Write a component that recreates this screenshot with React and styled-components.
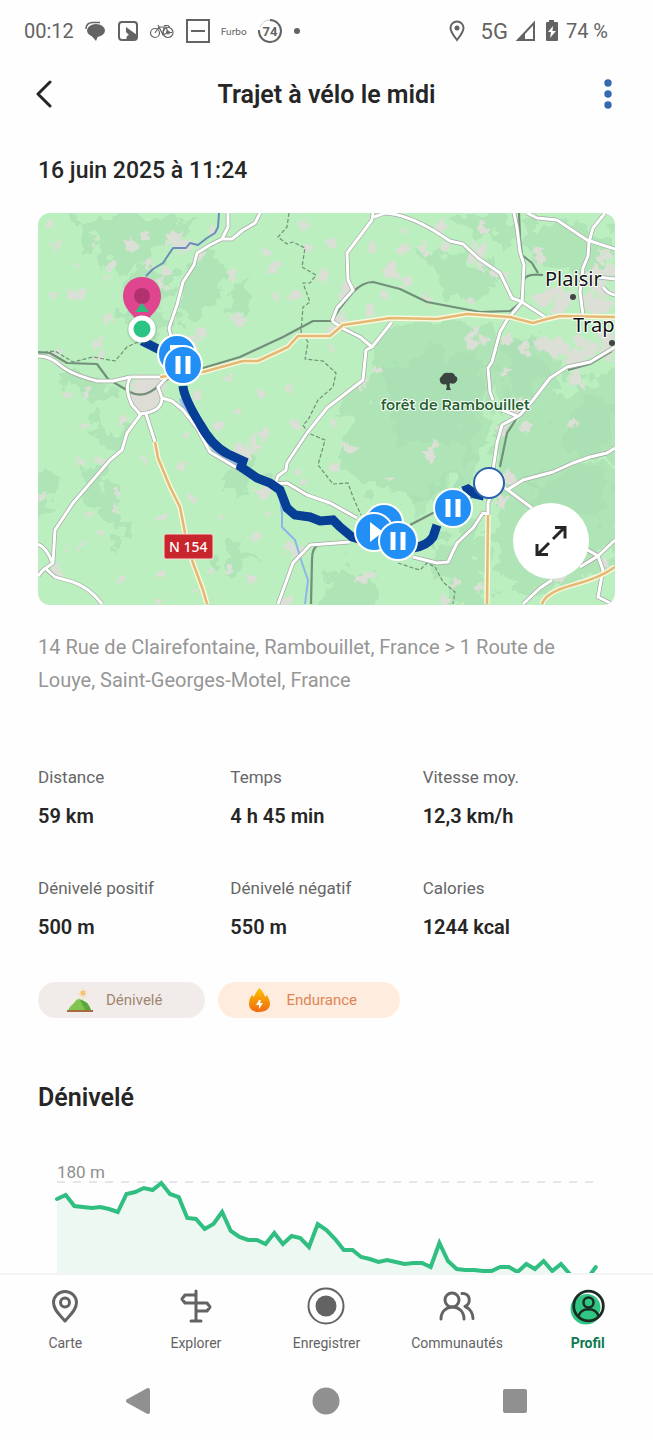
import React from "react";
import styled, { createGlobalStyle } from "styled-components";

const GlobalStyle = createGlobalStyle`
  * {
    box-sizing: border-box;
  }
  body {
    margin: 0;
    background-color: #fefefe;
    color: #262626;
    font-family: Roboto, "Liberation Sans", sans-serif;
  }
  button {
    padding: 0;
    border: none;
    background: none;
    font: inherit;
    cursor: pointer;
  }
  svg {
    display: block;
  }
`;

const Screen = styled.div`
  height: 100vh;
  display: flex;
  flex-direction: column;
`;

/* status bar */

const StatusBar = styled.div`
  display: flex;
  flex-shrink: 0;
  align-items: center;
  justify-content: space-between;
  height: 62px;
  padding: 0 45px 0 24px;
  color: #636363;
  font-size: 20px;
`;

const StatusGroup = styled.div`
  display: flex;
  align-items: center;
  gap: ${(props) => props.gap};
`;

const Network = styled.span`
  font-size: 22px;
`;

const Brand = styled.span`
  font-family: Lato, sans-serif;
  font-size: 10px;
`;

/* header */

const Header = styled.header`
  display: grid;
  grid-template-columns: 1fr auto 1fr;
  flex-shrink: 0;
  align-items: center;
  height: 64px;
  padding: 0 36px;
`;

const Title = styled.h1`
  margin: 0;
  font-size: 25px;
  font-weight: 600;
`;

const HeaderButton = styled.button`
  justify-self: ${(props) => props.side};
`;

/* content */

const Content = styled.main`
  flex: 1;
  min-height: 0;
  overflow: hidden;
  padding: 30px 38px 0;
`;

const DateLine = styled.p`
  margin: 0 0 27px;
  font-size: 23px;
  font-weight: 500;
  line-height: 30px;
`;

const MapCard = styled.div`
  position: relative;
  overflow: hidden;
  border-radius: 12px;
`;

const MapDrawing = styled.svg`
  width: 100%;
  height: auto;
`;

const ExpandButton = styled.button`
  position: absolute;
  right: 26px;
  bottom: 26px;
  display: flex;
  align-items: center;
  justify-content: center;
  width: 76px;
  height: 76px;
  border-radius: 50%;
  background-color: #ffffff;
`;

const Address = styled.p`
  margin: 26px 0 68px;
  color: #969696;
  font-size: 20px;
  line-height: 33px;
`;

const Stats = styled.dl`
  display: grid;
  grid-template-columns: repeat(3, 1fr);
  row-gap: 45px;
  margin: 0;
`;

const StatLabel = styled.dt`
  margin-bottom: 12px;
  color: #666666;
  font-size: 17px;
  line-height: 24px;
`;

const StatValue = styled.dd`
  margin: 0;
  font-size: 20px;
  font-weight: 600;
  line-height: 30px;
`;

const Chips = styled.div`
  display: flex;
  gap: 13px;
  margin: 40px 0 62px;
`;

const Chip = styled.div`
  display: flex;
  align-items: center;
  gap: 12px;
  height: 36px;
  padding: 0 43px 0 28px;
  border-radius: 18px;
  background-color: ${(props) => props.bg};
  color: ${(props) => props.color};
  font-size: 15px;
`;

const SectionTitle = styled.h2`
  margin: 0 0 48px;
  font-size: 25px;
  font-weight: 600;
  line-height: 36px;
`;

const ChartLabel = styled.p`
  margin: 0 19px;
  color: #8f8f8f;
  font-size: 17px;
  line-height: 16px;
`;

const Chart = styled.svg`
  width: 100%;
  height: auto;
`;

/* bottom navigation */

const TabBar = styled.nav`
  display: grid;
  grid-template-columns: repeat(5, 1fr);
  flex-shrink: 0;
  height: 89px;
  padding-top: 12px;
  border-top: 2px solid #f3f4f4;
`;

const Tab = styled.a`
  display: flex;
  flex-direction: column;
  align-items: center;
  gap: 8px;
  color: ${(props) => (props.$active ? "#0c7a4f" : "#636363")};
  font-size: 14px;
  font-weight: ${(props) => (props.$active ? 700 : 400)};
  line-height: 20px;
  text-decoration: none;
`;

const SystemBar = styled.div`
  display: grid;
  grid-template-columns: repeat(3, 1fr);
  flex-shrink: 0;
  justify-items: center;
  align-items: center;
  height: 78px;
  padding: 0 44px;
`;

const stats = [
  { label: "Distance", value: "59 km" },
  { label: "Temps", value: "4 h 45 min" },
  { label: "Vitesse moy.", value: "12,3 km/h" },
  { label: "Dénivelé positif", value: "500 m" },
  { label: "Dénivelé négatif", value: "550 m" },
  { label: "Calories", value: "1244 kcal" },
];

// depth under the 180 m line, one value per sample
const samples = [
  17, 13, 24, 25, 26, 25, 27, 30, 12, 10, 6, 8, 1, 12, 15, 36, 37, 47, 42, 30,
  49, 55, 58, 58, 62, 51, 62, 54, 56, 65, 42, 48, 57, 68, 68, 75, 77, 80, 78,
  80, 82, 81, 81, 85, 61, 79, 87, 88, 88, 89, 89, 85, 85, 90, 82, 87, 79, 89,
  82, 92, 100, 97, 85,
];

const profile = samples
  .map((depth, i) => `${(19 + i * 8.69).toFixed(1)},${depth + 2}`)
  .join(" ");

// x, y, radius of the built-up patches
const patches = [
  [50, 227, 5], [55, 246, 6], [94, 245, 4], [130, 245, 8], [144, 236, 6],
  [180, 243, 11], [172, 240, 8], [78, 264, 4], [110, 265, 5], [107, 279, 4],
  [150, 265, 6], [168, 272, 6], [162, 283, 5], [200, 254, 6], [232, 274, 6],
  [267, 252, 5], [273, 267, 7], [308, 248, 5], [304, 225, 6], [323, 278, 5],
  [72, 294, 6], [83, 297, 5], [52, 296, 4], [110, 319, 5], [276, 296, 4],
  [294, 295, 7], [238, 319, 8], [198, 335, 8], [190, 348, 8], [215, 230, 5],
  [98, 345, 6], [99, 357, 5], [55, 353, 6], [180, 375, 5], [230, 380, 4],
  [69, 396, 4], [87, 393, 5], [199, 398, 6], [261, 393, 4], [290, 388, 4],
  [84, 425, 4], [123, 422, 6], [187, 435, 4], [218, 426, 5], [237, 413, 4],
  [255, 442, 8], [243, 451, 9], [296, 424, 6], [262, 434, 6], [80, 461, 4],
  [100, 460, 4], [143, 459, 4], [182, 465, 4], [42, 496, 5], [118, 494, 4],
  [89, 514, 5], [116, 509, 4], [192, 498, 5], [161, 517, 6], [100, 533, 4],
  [67, 549, 4], [82, 545, 4], [56, 570, 6], [121, 579, 5], [255, 537, 6],
  [223, 516, 3], [261, 492, 9], [267, 515, 4], [298, 471, 4], [305, 481, 4],
  [295, 551, 9], [288, 547, 7], [230, 571, 5], [211, 571, 3], [161, 574, 4],
  [250, 579, 5], [160, 603, 5], [196, 591, 4], [285, 602, 8], [330, 242, 6],
  [372, 247, 5], [403, 248, 6], [424, 249, 6], [444, 247, 6], [440, 227, 7],
  [482, 227, 6], [478, 252, 9], [480, 262, 7], [345, 292, 8], [350, 286, 6],
  [392, 273, 9], [406, 284, 7], [427, 297, 6], [370, 311, 6], [324, 277, 6],
  [404, 232, 4], [540, 256, 7], [385, 295, 4], [493, 273, 5], [507, 275, 4],
  [342, 321, 7], [332, 330, 5], [365, 382, 7], [376, 370, 4], [475, 332, 6],
  [470, 343, 8], [482, 338, 5], [507, 340, 6], [540, 300, 10], [552, 292, 9],
  [565, 298, 9], [560, 306, 8], [590, 302, 12], [604, 307, 9], [600, 290, 10],
  [596, 277, 9], [604, 256, 7], [610, 272, 8], [545, 345, 9], [560, 350, 12],
  [573, 357, 11], [590, 350, 10], [580, 340, 9], [607, 352, 8], [577, 380, 9],
  [604, 335, 9], [330, 348, 4], [333, 422, 5], [348, 448, 7], [336, 468, 5],
  [430, 455, 7], [435, 445, 5], [527, 428, 6], [520, 405, 9], [512, 412, 7],
  [500, 430, 8], [389, 478, 4], [367, 576, 7], [360, 577, 4], [456, 584, 5],
  [446, 600, 6], [480, 588, 5], [508, 480, 8], [503, 500, 7], [560, 575, 9],
  [605, 565, 6], [573, 424, 5], [505, 371, 4], [525, 349, 7], [470, 300, 4],
];

const woods = [
  "M110 235 L150 220 190 222 168 245 150 252 132 270 112 262 96 268 100 250Z",
  "M84 225 L120 214 146 218 110 232 88 240Z",
  "M190 275 L204 260 222 272 214 300 196 320 184 316Z",
  "M150 262 L172 278 160 300 178 330 160 335 128 318 134 290Z",
  "M236 292 L250 285 246 300 238 308Z",
  "M455 218 L500 214 512 225 500 240 470 232Z",
  "M425 255 L470 258 500 285 470 300 440 280Z",
  "M527 226 L575 222 615 250 590 280 540 268Z",
  "M375 340 L410 325 480 325 500 350 488 390 492 430 470 470 420 500 380 490 340 470 352 440 345 410 372 385Z",
  "M500 340 L560 345 550 380 520 410 500 400 492 370Z",
  "M538 400 L580 380 625 378 625 445 560 470 520 480 500 500 503 440Z",
  "M505 500 L540 480 625 460 625 540 560 590 510 580 495 540Z",
  "M430 545 L480 530 482 614 462 614 452 580 430 560Z",
  "M330 578 L352 570 380 590 352 614 325 614Z",
  "M220 555 L244 545 256 560 230 565Z",
  "M28 475 L58 482 50 508 28 515Z",
  "M92 475 L112 490 124 535 116 540 100 505 84 494Z",
  "M225 486 L248 465 255 470 232 497Z",
  "M60 372 L90 378 120 392 104 400 70 386Z",
  "M96 418 L124 440 112 448 92 432Z",
];

const darkWoods = [
  "M388 372 L430 350 478 352 484 390 470 430 480 462 430 440 390 450 396 412Z",
  "M505 348 L530 340 545 372 520 398 500 384Z",
  "M560 420 L600 395 615 410 612 440 575 455Z",
  "M525 490 L570 470 612 475 600 520 550 520Z",
  "M412 500 L440 480 465 470 448 500 410 520Z",
];

const whiteRoads = [
  "M228 213 L228 227 222 239",
  "M260 213 L255 223 243 230 232 239 222 239 210 245 197 253 194 265 183 282 177 305 169 328 172 342",
  "M38 356 Q50 356 60 365 T97 381 L113 381 130 377 160 377",
  "M130 378 Q124 388 132 405 L140 414 Q162 412 162 398 L158 387 168 376",
  "M162 398 L172 401 183 410 197 428 210 452 237 468 270 484 287 483 307 495 330 503 357 518",
  "M141 414 L127 433 122 450 110 460 73 503 55 530 53 563 43 570 38 576",
  "M38 544 Q47 548 52 562",
  "M45 568 L55 577 73 582 Q90 588 102 604",
  "M146 414 L155 442",
  "M276 482 L278 476 286 470 287 463 307 433 327 408 363 380 366 350 372 347 392 322",
  "M332 321 L342 328 360 337 372 347",
  "M373 213 L372 220 347 253 348 280 353 290 337 308 332 321",
  "M374 217 L385 213 Q405 214 433 230 L450 241 463 244 478 258 500 273 512 298 522 302 545 317",
  "M514 213 L517 228 520 252 524 265 522 302 507 320 500 332 492 362 488 368 490 392 493 400",
  "M527 213 L537 218 557 220 587 240 615 249",
  "M605 213 L593 228 589 242 588 256 583 268 580 292 583 315",
  "M598 277 L615 279",
  "M603 287 Q608 294 615 295",
  "M615 347 L590 362 567 367 550 378 533 400 520 415 502 425 497 443 493 470",
  "M502 410 L517 416",
  "M615 448 L607 453 590 457 573 463 553 472 523 480 507 490",
  "M505 488 L532 508",
  "M586 549 L598 556 580 567",
  "M615 540 L598 556 603 570 598 597 612 604",
  "M552 580 L540 588 523 604",
  "M488 515 L488 503 493 490",
  "M487 514 L483 513 473 528 457 543 448 562 437 563 413 557",
  "M350 542 L310 545 293 563 278 604",
];

const orangeRoads = [
  "M160 377 L203 372 243 361 258 361 288 347 298 336 330 336 343 325 390 318 437 319 467 314 510 317 533 323 547 319 560 316 615 317",
  "M155 442 L158 458 170 487 180 507 185 533 193 563 203 590 207 604",
  "M488 515 L487 604",
  "M615 567 Q600 578 573 585 T542 604",
];

const rails = [
  "M38 352 L50 353 67 363 97 364 108 379 130 392 Q145 400 160 384 L180 371 203 368 240 357 283 337 313 321 332 321 340 308 353 292 Q363 282 373 282 L400 289 427 302 480 312 510 311 520 303 524 280 Q526 273 543 275",
  "M519 213 L520 238 522 255 532 263 538 273",
  "M612 351 L590 364 568 370",
  "M517 418 L507 433 500 467",
  "M410 525 L433 513 460 503 482 492",
  "M330 544 L318 545 Q312 548 312 560 L311 604",
];

const borders = [
  "M289 213 L287 227 278 237 287 244 293 242 305 248 302 267 316 275 310 283 303 283 310 302 303 307 301 332 308 342 305 359 323 361 336 373 333 387 318 400 308 420 303 425 308 433 325 440 318 465 333 484 348 483 353 497 361 515",
  "M398 563 L413 568 420 570 427 563 435 567 443 582 455 592 453 604",
  "M38 353 L55 351 73 362 93 357 115 361 127 347 140 341",
];

// jagged outline around a centre; the wobble only depends on the position
const outline = ([x, y, r]) =>
  Array.from({ length: 9 }, (_, i) => {
    const angle = (i / 9) * Math.PI * 2;
    const wobble = 0.45 + (((x * 7 + y * 13 + i * i * 29) % 17) / 17) * 0.95;
    const px = x + Math.cos(angle) * r * wobble;
    const py = y + Math.sin(angle) * r * wobble;
    return `${px.toFixed(1)},${py.toFixed(1)}`;
  }).join(" ");

const PausePin = ({ x, y }) => (
  <g>
    <circle cx={x} cy={y} r="19" fill="#218ff5" stroke="#fff" strokeWidth="2" />
    <path d={`M${x - 5} ${y - 9}v18M${x + 5} ${y - 9}v18`} stroke="#fff" strokeWidth="5" />
  </g>
);

const RouteMap = () => (
  <MapDrawing viewBox="38 213 577 392" role="img" aria-label="Carte du trajet">
    <defs>
      <filter id="ragged" x="-10%" y="-10%" width="120%" height="120%">
        <feTurbulence type="fractalNoise" baseFrequency="0.05" numOctaves="4" seed="4" />
        <feDisplacementMap in="SourceGraphic" scale="46" xChannelSelector="R" yChannelSelector="G" />
      </filter>
      <filter id="rough" x="-10%" y="-10%" width="120%" height="120%">
        <feTurbulence type="fractalNoise" baseFrequency="0.15" numOctaves="2" seed="7" />
        <feDisplacementMap in="SourceGraphic" scale="12" xChannelSelector="R" yChannelSelector="G" />
      </filter>
    </defs>
    <rect x="38" y="213" width="577" height="392" fill="#bbefbf" />
    <g fill="#abe2b3" opacity="0.75" filter="url(#ragged)">
      {woods.map((d) => (
        <path key={d} d={d} stroke="#abe2b3" strokeWidth="6" />
      ))}
    </g>
    <g fill="#a3daaf" opacity="0.4" filter="url(#ragged)">
      {darkWoods.map((d) => (
        <path key={d} d={d} />
      ))}
    </g>
    <g fill="#dcdfd5" filter="url(#rough)">
      {patches.map((p) => (
        <polygon key={p.join()} points={outline(p)} />
      ))}
      <path d="M131 384l12-8 24 2-3 14-8 16-14 6-10-10z" fill="#dedcd7" />
    </g>
    <g fill="none" strokeLinejoin="round">
      <path
        d="M219 213 L218 227 215 233 207 238 198 245 190 243 186 248 173 248 167 257 163 263 153 269 146 276"
        stroke="#6a8dba"
        strokeWidth="2"
      />
      <path
        d="M184 398 L192 420 205 440 222 457 240 466 265 480 279 490 282 513 282 527 295 540 302 563 308 580 305 604"
        stroke="#8db5ea"
        strokeWidth="2"
      />
      <path d="M182 398l10 22M212 450l22 13" stroke="#a3c1ed" strokeWidth="7" />
      {borders.map((d) => (
        <path key={d} d={d} stroke="#71917a" strokeWidth="1.2" strokeDasharray="4 2" />
      ))}
      {rails.map((d) => (
        <path key={d} d={d} stroke="#728f7a" strokeWidth="2.2" />
      ))}
      {whiteRoads.map((d) => (
        <path key={d} d={d} stroke="#a4aaa4" strokeWidth="4.4" />
      ))}
      {whiteRoads.map((d) => (
        <path key={d} d={d} stroke="#fff" strokeWidth="3" />
      ))}
      {orangeRoads.map((d) => (
        <path key={d} d={d} stroke="#fbf7dd" strokeWidth="5.4" />
      ))}
      {orangeRoads.map((d) => (
        <path key={d} d={d} stroke="#e3b974" strokeWidth="2.6" />
      ))}
    </g>

    <g
      fontFamily="'Noto Sans', sans-serif"
      stroke="#fff"
      strokeWidth="2"
      strokeLinejoin="round"
      paintOrder="stroke"
    >
      <text x="545" y="286" fontSize="20" fill="#111">Plaisir</text>
      <text x="573" y="332" fontSize="20" fill="#111">Trap</text>
      <text
        x="381"
        y="410"
        fontSize="14"
        fontWeight="600"
        fill="#22602c"
        fontFamily="Montserrat, Lato, sans-serif"
      >
        forêt de Rambouillet
      </text>
    </g>
    <circle cx="573" cy="297" r="3" fill="#444" />
    <circle cx="612" cy="343" r="3" fill="#444" />
    <path
      d="M446 390c1-3 1-4 0-6-2 1-6 0-6-3-1-3 1-4 2-5 1-3 4-4 7-3 3-1 6 1 6 3 3 1 3 4 1 6-1 2-4 2-6 1-1 3 0 5 1 7zM446 385l-3-4M449 385l4-4"
      fill="#3a4440"
    />
    <rect x="164" y="534" width="49" height="25" rx="2" fill="#c9252d" stroke="#f5dcd7" />
    <text x="169" y="552" fontFamily="'Noto Sans', sans-serif" fontSize="14" fontWeight="500" fill="#fff">
      N 154
    </text>

    <g fill="none" stroke="#063f95" strokeWidth="9">
      <path d="M142 341 L158 349 170 352" />
      <path d="M183 386 Q184 398 200 424 Q212 446 228 454 L243 461 241 467 257 478 270 483 280 490 287 508 295 515 310 517 320 521 333 520 340 527 352 537 362 540" />
      <path d="M413 548 Q427 546 433 537 L437 525" />
      <path d="M463 491 L468 489 475 494 484 496" />
    </g>

    <path d="M142 277c-11 0-19 8-19 19 0 14 12 19 19 32 7-13 19-18 19-32 0-11-8-19-19-19z" fill="#e0458f" />
    <circle cx="142" cy="296" r="8" fill="#b1326e" />
    <path d="M142 303l7 9h-14z" fill="#2cbc7e" />
    <circle cx="142" cy="330" r="15" fill="#41664f" opacity="0.15" />
    <circle cx="142" cy="329" r="11" fill="#2cc482" stroke="#fff" strokeWidth="5" />

    <circle cx="177" cy="354" r="19" fill="#218ff5" stroke="#fff" strokeWidth="2" />
    <path d="M170 347h12" stroke="#fff" strokeWidth="4" />
    <PausePin x={183} y={365} />
    <circle cx="384" cy="523" r="19" fill="#218ff5" stroke="#fff" strokeWidth="2" />
    <circle cx="374" cy="532" r="19" fill="#218ff5" stroke="#fff" strokeWidth="2" />
    <path d="M370 522l13 10-13 10z" fill="#fff" />
    <PausePin x={398} y={541} />
    <PausePin x={453} y={508} />
    <circle cx="489" cy="483" r="15" fill="#fff" stroke="#2b60ad" strokeWidth="2" />
  </MapDrawing>
);

const ElevationChart = () => (
  <Chart viewBox="0 0 577 130" role="img" aria-label="Profil du dénivelé">
    <polygon points={`19,130 ${profile} 558,130`} fill="#edf8f3" />
    <path d="M19 2H558" stroke="#e6e6e6" strokeWidth="2" strokeDasharray="8 8" />
    <polyline points={profile} fill="none" stroke="#30be81" strokeWidth="4" strokeLinecap="round" />
  </Chart>
);

const PinIcon = () => (
  <svg width="34" height="38" viewBox="0 0 34 38" fill="none" stroke="#636363" strokeWidth="3">
    <path d="M17 34C12 28 5.500 23 5.500 15.500a11.500 11 0 0 1 23 0C28.500 23 22 28 17 34z" strokeLinejoin="round" />
    <circle cx="17" cy="15.500" r="4.500" />
  </svg>
);

const SignIcon = () => (
  <svg width="34" height="38" viewBox="0 0 34 38" fill="none" stroke="#636363" strokeWidth="3" strokeLinejoin="round" strokeLinecap="round">
    <path d="M17 4v30M12 34h10M17 8H6L3 12l3 4h22l3 4-3 4H17" />
  </svg>
);

const RecordIcon = () => (
  <svg width="38" height="38" viewBox="0 0 38 38">
    <circle cx="19" cy="19" r="17.500" fill="none" stroke="#636363" strokeWidth="2" />
    <circle cx="19" cy="19" r="10.500" fill="#636363" />
  </svg>
);

const PeopleIcon = () => (
  <svg width="38" height="38" viewBox="0 0 38 38" fill="none" stroke="#636363" strokeWidth="3" strokeLinecap="round">
    <circle cx="14" cy="13" r="7" />
    <path d="M3 32c0-16 23-16 23 0M24 6.500c8-1 10 10 3 13 5 2 8 7 8 12" strokeLinejoin="round" />
  </svg>
);

const ProfileIcon = () => (
  <svg width="38" height="38" viewBox="0 0 38 38" fill="none" stroke="#1c2a24" strokeWidth="2.500">
    <circle cx="17" cy="22" r="15.500" fill="#2fc583" stroke="none" />
    <circle cx="19.500" cy="19" r="14.500" fill="#fff" stroke="none" />
    <circle cx="18" cy="20.500" r="13.500" fill="#2fc583" stroke="none" />
    <circle cx="19.500" cy="19" r="14.800" strokeWidth="2.800" />
    <circle cx="19.500" cy="15.500" r="5" />
    <path d="M9.500 29c3-9 17-9 20 0" />
  </svg>
);

const tabs = [
  { name: "Carte", Icon: PinIcon },
  { name: "Explorer", Icon: SignIcon },
  { name: "Enregistrer", Icon: RecordIcon },
  { name: "Communautés", Icon: PeopleIcon },
  { name: "Profil", Icon: ProfileIcon, active: true },
];

const App = () => {
  return (
    <Screen>
      <GlobalStyle />
      <StatusBar>
        <StatusGroup gap="11px">
          <span>00:12</span>
          <svg width="20" height="22" viewBox="0 0 20 22" fill="#636363">
            <ellipse cx="11" cy="10.500" rx="9" ry="6.500" />
            <path d="M5 14l6 7 2-5z" />
            <path d="M1 9Q1 3 7 2.500H15" fill="none" stroke="#636363" strokeWidth="1.500" />
          </svg>
          <svg width="22" height="22" viewBox="0 0 22 22">
            <rect x="3" y="2" width="18" height="18" rx="3" fill="none" stroke="#636363" strokeWidth="2" />
            <path d="M10 7l11 8v5H10l1-4 2-1-3-3z" fill="#636363" />
          </svg>
          <svg width="26" height="22" viewBox="0 0 26 22" fill="none" stroke="#636363" strokeWidth="1.200">
            <circle cx="6" cy="13" r="4.500" />
            <circle cx="19" cy="12.500" r="5" />
            <path d="M6 13l4-6h7l2 5.500h4M9 5l1 2 4 8 5-2.500M15 7l-1 8M15 5.500h4l2 2" />
            <circle cx="19" cy="12.500" r="1.500" />
          </svg>
          <svg width="24" height="24" viewBox="0 0 24 24" fill="none" stroke="#636363" strokeWidth="2">
            <path d="M1 1h22v22H1zM5 12h14" />
          </svg>
          <Brand>Furbo</Brand>
          <svg width="24" height="24" viewBox="0 0 24 24">
            <path d="M12 1A11 11 0 1 1 1 11" fill="none" stroke="#636363" strokeWidth="2" />
            <path d="M2 8A11 11 0 0 1 12 1" fill="none" stroke="#ccc" strokeWidth="1" />
            <text x="12" y="17" fontSize="13" fontWeight="700" textAnchor="middle" fill="#636363">74</text>
          </svg>
          <svg width="8" height="8" viewBox="0 0 8 8">
            <circle cx="4" cy="4" r="3" fill="#636363" />
          </svg>
        </StatusGroup>
        <StatusGroup gap="7px">
          <svg width="26" height="22" viewBox="0 0 26 22" fill="none" stroke="#636363" strokeWidth="2">
            <path d="M9 20C6 16 2.500 12 2.500 8a6.500 6.500 0 0 1 13 0C15.500 12 12 16 9 20z" />
            <circle cx="9" cy="8" r="2.500" fill="#636363" stroke="none" />
          </svg>
          <Network>5G</Network>
          <svg width="22" height="22" viewBox="0 0 22 22">
            <path d="M3 20H19V3z" fill="none" stroke="#636363" strokeWidth="2" />
            <path d="M2 20L10 12V20z" fill="#636363" />
          </svg>
          <svg width="15" height="22" viewBox="0 0 15 22">
            <path d="M5 0h5v2h3q1 0 1 1v17q0 1-1 1H3q-1 0-1-1V3q0-1 1-1h2z" fill="#636363" />
            <path d="M9 6l-5 6h3l-1 6 6-7H8.500z" fill="#fff" />
          </svg>
          <span>74 %</span>
        </StatusGroup>
      </StatusBar>

      <Header>
        <HeaderButton side="start" aria-label="Retour">
          <svg width="16" height="28" viewBox="0 0 16 28" fill="none" stroke="#262626" strokeWidth="3" strokeLinecap="round" strokeLinejoin="round">
            <path d="M14 2L2 14l12 12" />
          </svg>
        </HeaderButton>
        <Title>Trajet à vélo le midi</Title>
        <HeaderButton side="end" aria-label="Plus d'options">
          <svg width="18" height="32" viewBox="0 0 18 32" fill="#3569b2">
            <circle cx="9" cy="5" r="3.700" />
            <circle cx="9" cy="16" r="3.700" />
            <circle cx="9" cy="27" r="3.700" />
          </svg>
        </HeaderButton>
      </Header>

      <Content>
        <DateLine>16 juin 2025 à 11:24</DateLine>
        <MapCard>
          <RouteMap />
          <ExpandButton aria-label="Agrandir la carte">
            <svg width="34" height="34" viewBox="0 0 34 34" fill="none" stroke="#262626" strokeWidth="3">
              <path d="M19 15L30 4M21 3.500h10v11M15 19L4 30M3 20v10.500h11" />
            </svg>
          </ExpandButton>
        </MapCard>
        <Address>
          14 Rue de Clairefontaine, Rambouillet, France &gt; 1 Route de Louye,
          Saint-Georges-Motel, France
        </Address>

        <Stats>
          {stats.map((stat) => (
            <div key={stat.label}>
              <StatLabel>{stat.label}</StatLabel>
              <StatValue>{stat.value}</StatValue>
            </div>
          ))}
        </Stats>

        <Chips>
          <Chip bg="#f1ecea" color="#a08672">
            <svg width="28" height="28" viewBox="0 0 28 28">
              <path d="M17 2v12M11 8h12M13 4l8 8M21 4l-8 8" stroke="#f7dcae" strokeWidth="1" />
              <circle cx="17" cy="7" r="2.500" fill="#f5c273" />
              <path d="M2 25c1-4 3-5 6-8 3-5 7-5 10-1 4 2 6 5 7 9z" fill="#82c54e" />
              <path d="M14 14c6 0 10 5 11 11h-5l-3-5z" fill="#5da63c" />
              <path d="M1 25h26" stroke="#a56a3f" strokeWidth="2" />
            </svg>
            Dénivelé
          </Chip>
          <Chip bg="#feecde" color="#e08557">
            <svg width="28" height="28" viewBox="0 0 28 28">
              <defs>
                <linearGradient id="flame" x1="0" y1="0" x2="0" y2="1">
                  <stop offset="0" stopColor="#fcc200" />
                  <stop offset="1" stopColor="#f06a13" />
                </linearGradient>
              </defs>
              <path d="M13 2c4 3 5 6 6 9l2-2c2 4 3 6 3 9 0 5-5 8-11 8S3 23 3 18c0-4 1-6 3-9l2 2c1-4 3-5 5-9z" fill="url(#flame)" />
              <path d="M13 14l-3 5h3v4l4-6h-3l1-3z" fill="#fff" />
            </svg>
            Endurance
          </Chip>
        </Chips>

        <SectionTitle>Dénivelé</SectionTitle>
        <ChartLabel>180 m</ChartLabel>
        <ElevationChart />
      </Content>

      <TabBar>
        {tabs.map(({ name, Icon, active }) => (
          <Tab key={name} href="#" $active={active}>
            <Icon />
            {name}
          </Tab>
        ))}
      </TabBar>

      <SystemBar>
        <button aria-label="Précédent">
          <svg width="28" height="30" viewBox="0 0 28 30">
            <path d="M24 4v22L4 15z" fill="#909090" stroke="#909090" strokeWidth="4" strokeLinejoin="round" />
          </svg>
        </button>
        <button aria-label="Accueil">
          <svg width="28" height="28" viewBox="0 0 28 28">
            <circle cx="14" cy="14" r="13.500" fill="#909090" />
          </svg>
        </button>
        <button aria-label="Applications récentes">
          <svg width="28" height="28" viewBox="0 0 28 28">
            <rect x="2" y="2" width="24" height="24" rx="2" fill="#909090" />
          </svg>
        </button>
      </SystemBar>
    </Screen>
  );
};

export default App;
